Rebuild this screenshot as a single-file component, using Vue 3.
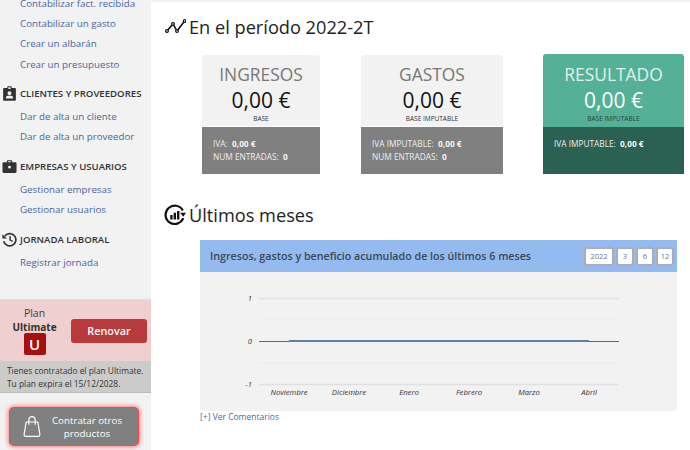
<script setup>
const groups = [
  { title: null, links: ['Contabilizar fact. recibida', 'Contabilizar un gasto', 'Crear un albarán', 'Crear un presupuesto'] },
  { title: 'CLIENTES Y PROVEEDORES', icon: 'badge', links: ['Dar de alta un cliente', 'Dar de alta un proveedor'] },
  { title: 'EMPRESAS Y USUARIOS', icon: 'case', links: ['Gestionar empresas', 'Gestionar usuarios'] },
  { title: 'JORNADA LABORAL', icon: 'history', links: ['Registrar jornada'] },
]
const cards = [
  { name: 'INGRESOS', sub: 'BASE', w: 118, rows: [['IVA:', '0,00 €'], ['NUM ENTRADAS:', '0']] },
  { name: 'GASTOS', sub: 'BASE IMPUTABLE', w: 142, rows: [['IVA IMPUTABLE:', '0,00 €'], ['NUM ENTRADAS:', '0']] },
  { name: 'RESULTADO', sub: 'BASE IMPUTABLE', w: 141, green: true, rows: [['IVA IMPUTABLE:', '0,00 €']] },
]
const months = [['Noviembre', 89], ['Diciembre', 149], ['Enero', 209], ['Febrero', 269], ['Marzo', 329], ['Abril', 389]]
const ranges = ['2022', '3', '6', '12']
</script>

<template>
  <div class="page">
    <aside class="side">
      <nav class="nav">
        <section v-for="g in groups" :key="g.links[0]" class="group">
          <h4 v-if="g.title" class="group-title">
            <svg v-if="g.icon === 'badge'" class="gi" viewBox="0 0 16 16"><path fill="#333" fill-rule="evenodd" d="M2.5 2H5.6V1.2C5.6.6 6 .2 6.6.2h2.8c.6 0 1 .4 1 1V2h3.1c.8 0 1.3.6 1.3 1.3v11.2c0 .8-.5 1.3-1.3 1.3h-11c-.8 0-1.3-.5-1.3-1.3V3.300c0-.7.5-1.300 1.300-1.300zM6.800 1.300v1.900h2.400V1.300zM8 5.700a2.100 2.100 0 1 0 0 4.200 2.100 2.100 0 0 0 0-4.200zM4.200 13.300h7.600v-1c0-1-1-1.800-2-1.800H6.200c-1 0-2 .8-2 1.800z"/></svg>
            <svg v-else-if="g.icon === 'case'" class="gi" viewBox="0 0 16 16"><path fill="#333" fill-rule="evenodd" d="M5.200 3.500V2.300c0-.6.500-1.100 1.100-1.100h3.400c.6 0 1.100.5 1.100 1.100v1.200h3.400c.7 0 1.300.6 1.300 1.300v8.900c0 .7-.6 1.300-1.300 1.300H1.800c-.7 0-1.300-.6-1.300-1.300V4.800c0-.7.6-1.300 1.300-1.300zM6.500 2.500v1h3v-1zM8 7.200a1.500 1.500 0 1 0 0 3 1.500 1.500 0 0 0 0-3z"/></svg>
            <svg v-else class="gi" viewBox="0 0 16 16"><path fill="none" stroke="#333" stroke-width="1.800" d="M3 4.200A6.600 6.600 0 1 1 1.800 9.800"/><path fill="#333" d="M.4 2.300 5.200 6.800.4 7z"/><path fill="none" stroke="#333" stroke-width="1.500" d="M8.600 4.300v4.200l2.700 1.600"/></svg>
            <span>{{ g.title }}</span>
          </h4>
          <a v-for="l in g.links" :key="l" class="link">{{ l }}</a>
        </section>
      </nav>
      <div class="plan">
        <div class="plan-name">
          <span>Plan</span>
          <strong>Ultimate</strong>
          <span class="u">U</span>
        </div>
        <button class="renew">Renovar</button>
      </div>
      <div class="plan-note">Tienes contratado el plan Ultimate.<br>Tu plan expira el 15/12/2028.</div>
      <div class="more">
        <svg class="bag" viewBox="0 0 20 24"><path fill="none" stroke="#fff" stroke-width="1.300" stroke-linejoin="round" d="M3.500 7h13l2.300 14c0 1.200-.6 2-1.800 2H3c-1.200 0-1.800-.8-1.800-2z"/><path fill="none" stroke="#fff" stroke-width="1.300" d="M6.500 10V4.500C6.500 2.500 8 1 10 1s3.500 1.500 3.500 3.500V10"/></svg>
        <span class="more-text">Contratar otros productos</span>
      </div>
    </aside>

    <main class="main">
      <h2 class="title first">
        <svg class="ti" viewBox="0 0 24 24"><path fill="none" stroke="#111" stroke-width="1.700" d="M3.300 16.400 9.800 8.700 14.200 16.400 22.500 5.500"/><g fill="#fff" stroke="#111" stroke-width="1.300"><circle cx="3.300" cy="16.400" r="1.500"/><circle cx="9.800" cy="8.700" r="1.500"/><circle cx="14.200" cy="16.400" r="1.500"/><circle cx="22.500" cy="5.500" r="1.500"/></g></svg>
        <span>En el período 2022-2T</span>
      </h2>
      <div class="cards">
        <article v-for="c in cards" :key="c.name" class="card" :class="{ green: c.green }" :style="{ width: c.w + 'px' }">
          <div class="card-top">
            <div class="card-name">{{ c.name }}</div>
            <div class="card-value">0,00 €</div>
            <div class="card-sub">{{ c.sub }}</div>
          </div>
          <div class="card-bottom">
            <div v-for="r in c.rows" :key="r[0]" class="card-row">{{ r[0] }}&nbsp; <b>{{ r[1] }}</b></div>
          </div>
        </article>
      </div>

      <h2 class="title second">
        <svg class="ti" viewBox="0 0 24 24"><path fill="none" stroke="#111" stroke-width="2.400" d="M20.500 7A10 10 0 1 0 21 15.500"/><path fill="#111" d="M17.500 9.500H24L21 14z"/><path fill="#111" d="M6.800 12h2.600v5H6.800zM10.500 9.500h2.600V17h-2.600zM14.200 7.500h2.600V17h-2.600z"/></svg>
        <span>Últimos meses</span>
      </h2>
      <section class="panel">
        <header class="panel-head">
          <span class="panel-title">Ingresos, gastos y beneficio acumulado de los últimos 6 meses</span>
          <div class="ranges"><button v-for="r in ranges" :key="r" class="range">{{ r }}</button></div>
        </header>
        <div class="chart">
          <svg class="plot" width="477" height="139" viewBox="0 0 477 139">
            <g stroke="#e0e0e0">
              <path d="M59 26.500H419" stroke-width="1.500"/>
              <path d="M59 112.500H419" stroke-width="1.500"/>
              <path d="M59 48H419M59 91H419" stroke="#ebebeb" stroke-width="1"/>
            </g>
            <path d="M59 69.500H419" stroke="#666" stroke-width="1"/>
            <path d="M89 69H389" stroke="#5b7fa8" stroke-width="2"/>
            <g class="tick">
              <text x="52" y="29" text-anchor="end">1</text>
              <text x="52" y="72" text-anchor="end">0</text>
              <text x="52" y="115" text-anchor="end">-1</text>
              <text v-for="m in months" :key="m[0]" :x="m[1]" y="123" text-anchor="middle">{{ m[0] }}</text>
            </g>
          </svg>
        </div>
        <a class="comments"><span class="plus">[+]</span> Ver Comentarios</a>
      </section>
    </main>
  </div>
</template>

<style>
html, body { margin: 0; background: #fff; }
</style>

<style scoped>
* { box-sizing: border-box; }
.page {
  width: 690px; height: 450px; overflow: hidden; display: flex;
  font-family: "Open Sans", sans-serif; color: #333; background: #fff;
}
.side { width: 151px; flex: none; background: #f2f2f2; display: flex; flex-direction: column; }
.nav { margin-top: -6px; flex: none; height: 305px; }
.group { margin-bottom: 9px; }
.group-title {
  margin: 0 0 3.500px; height: 20px; display: flex; align-items: center; gap: 3px; white-space: nowrap;
  padding-left: 2px; font-size: 9.600px; font-weight: 600; color: #333;
}
.gi { width: 15px; height: 15px; flex: none; }
.link { display: block; height: 20.200px; line-height: 20px; padding-left: 20px; font-size: 9.750px; color: #4a66a0; }
.plan {
  height: 62px; background: #efcfcf; border-top: 1px solid #ddd; display: flex; align-items: center;
  padding: 0 4px 0 10px; gap: 12px; flex: none;
}
.plan-name { width: 49px; display: flex; flex-direction: column; align-items: center; font-size: 10.500px; line-height: 14px; color: #444; }
.plan-name strong { color: #333; font-weight: 700; font-size: 10px; }
.u {
  width: 22px; height: 22px; margin-top: -1px; background: #a81010; border-radius: 2px; color: #fff;
  font-size: 15px; line-height: 22px; text-align: center; font-weight: 600;
}
.renew {
  width: 76px; height: 24px; border: 0; border-radius: 3px; background: #b83a3c; color: #fff;
  font: 600 10.800px "Open Sans", sans-serif; padding: 0;
}
.plan-note {
  height: 32px; flex: none; background: #cbcbcb; padding: 3px 0 0 7px; font-size: 8.400px; line-height: 13px;
  color: #333; border-bottom: 1px solid #bbb; white-space: nowrap;
}
.more {
  margin: 15px 0 0 10px; width: 128px; height: 37px; background: #808080; border-radius: 4px;
  box-shadow: 0 0 0 1px #f04a4a, 0 0 4px 2px #f77; display: flex; align-items: center; padding: 0 0 0 13px; gap: 10px; flex: none;
}
.bag { width: 18px; height: 23px; flex: none; }
.more-text { width: 72px; font-size: 9.750px; line-height: 13px; color: #fff; text-align: center; }
.main { flex: 1; min-width: 0; border-top: 2px solid #f2f2f2; }
.title { margin: 0; display: flex; align-items: center; gap: 3px; font-weight: 400; font-size: 18.200px; line-height: 28px; color: #222; padding-left: 13px; }
.title.first { margin-top: 11px; }
.title.second { margin-top: 27px; }
.ti { width: 22px; height: 22px; flex: none; }
.cards { display: flex; gap: 41px; margin: 14px 0 0 51px; }
.card { height: 119px; display: flex; flex-direction: column; }
.card-top { height: 71px; background: #f2f2f2; border-radius: 3px 3px 0 0; text-align: center; }
.card-name { font-size: 17.400px; line-height: 22px; padding-top: 8px; height: 28px; color: #777; }
.card-value { font-size: 21px; line-height: 26px; color: #111; margin-top: 4px; }
.card-sub { font-size: 6.500px; line-height: 10px; color: #333; margin-top: 1px; }
.card-bottom { height: 47px; margin-top: 1px; background: #808080; padding: 11px 0 0 11px; color: #eee; font-size: 8.300px; line-height: 12.500px; }
.card-row b { font-weight: 700; color: #f4f4f4; }
.green { margin: -1px 0 0 -1px; height: 120px; }
.green .card-top { background: #54b198; height: 73px; }
.green .card-name { color: #e3efe9; padding-top: 9px; height: 29px; }
.green .card-value { color: #fff; }
.green .card-sub { color: #24453b; }
.green .card-bottom { background: #2b6152; margin-top: 0; padding-top: 11px; }
.panel { margin: 11px 13px 0 49px; }
.panel-head {
  height: 32px; background: #93bbf0; display: flex; align-items: center; justify-content: space-between;
  padding: 0 3px 0 10px;
}
.panel-title { font-size: 10.700px; font-weight: 600; color: #3c4654; white-space: nowrap; }
.ranges { display: flex; gap: 2px; }
.range {
  height: 19px; min-width: 18px; padding: 0; background: #fff; border: 2px solid #a8adb8; border-radius: 3px;
  font: 7.500px "Open Sans", sans-serif; color: #6a7590;
}
.range:first-child { width: 30px; }
.chart { height: 139px; background: #f2f2f2; border-radius: 0 0 3px 3px; }
.plot { display: block; }
.tick text { font: italic 7.700px "Open Sans", sans-serif; fill: #333; }
.comments { display: block; font-size: 8.500px; line-height: 12px; color: #4a6ca6; }
</style>
